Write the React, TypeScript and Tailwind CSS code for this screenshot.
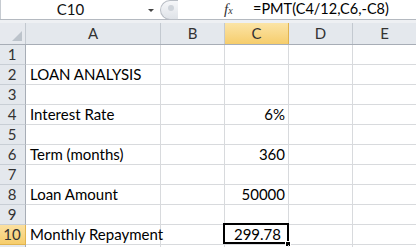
import React from "react";

const cols = ["A", "B", "C", "D", "E"];
const colWidths = ["w-[135px]", "w-[64px]", "w-[64px]", "w-[64px]", "w-[64px]"];

type Row = { n: number; a?: string; c?: string };

const rows: Row[] = [
  { n: 1 },
  { n: 2, a: "LOAN ANALYSIS" },
  { n: 3 },
  { n: 4, a: "Interest Rate", c: "6%" },
  { n: 5 },
  { n: 6, a: "Term (months)", c: "360" },
  { n: 7 },
  { n: 8, a: "Loan Amount", c: "50000" },
  { n: 9 },
  { n: 10, a: "Monthly Repayment", c: "299.78" },
  { n: 11 },
];

const cell = "h-[20px] shrink-0 border-r border-b border-[#d8dadd] leading-[19px]";

export default function App() {
  return (
    <div className="w-[416px] h-[247px] overflow-hidden bg-white font-['Lato',sans-serif] text-[15px] text-black">
      {/* formula bar */}
      <div className="flex h-[20px] border-b border-[#b4b9c0]">
        <div className="relative flex w-[160px] items-center justify-center border-l border-[#c6cbd1] bg-white">
          <span className="pr-[20px] leading-none text-[#111]">C10</span>
          <span className="absolute left-[147px] top-[9px] h-0 w-0 border-x-[3px] border-t-[3px] border-x-transparent border-t-[#444]" />
        </div>
        <div className="relative h-[20px] w-[18px] rounded-l-full border border-r-0 border-[#b9bec5] bg-gradient-to-b from-[#f6f7f9] to-[#dfe3e8]">
          <span className="absolute left-[7px] top-[4px] h-[6px] w-[6px] rounded-full bg-[#cfd4da]" />
        </div>
        <div className="flex flex-1 items-center">
          <span className="ml-[46px] w-[17px] font-['Liberation_Serif',serif] text-[15px] italic leading-none text-[#333]">
            f<span className="text-[10px]">x</span>
          </span>
          <span className="ml-[12px] text-[14.5px] leading-none">=PMT(C4/12,C6,-C8)</span>
        </div>
      </div>
      <div className="h-[3px] bg-[#eef0f3]" />

      {/* column headers */}
      <div className="flex h-[22px] border-b border-[#a7adb6] text-[#333]">
        <div className="relative w-[26px] shrink-0 border-r border-[#c3c9d0] bg-[#e6e9ee]">
          <span className="absolute left-[12px] top-[8px] h-0 w-0 border-b-[10px] border-l-[10px] border-b-[#bcc3cb] border-l-transparent" />
        </div>
        {cols.map((c, i) => (
          <div
            key={c}
            className={`${colWidths[i]} shrink-0 flex items-center justify-center border-r ${
              c === "C"
                ? "border-[#e0b34f] bg-gradient-to-b from-[#fbe4a6] to-[#f6cd6b]"
                : "border-[#c3c9d0] bg-[#e4e8ed]"
            }`}
          >
            {c}
          </div>
        ))}
      </div>

      {/* rows */}
      {rows.map((r) => (
        <div key={r.n} className="flex">
          <div
            className={`h-[20px] w-[26px] shrink-0 border-r border-b pr-[1px] text-center leading-[19px] text-[#333] ${
              r.n === 10
                ? "border-r-[#e0b34f] border-b-[#e0b34f] bg-gradient-to-b from-[#fbe0a0] to-[#f6cd6b]"
                : "border-r-[#a7adb6] border-b-[#c8ced5] bg-[#e4e8ed]"
            }`}
          >
            {r.n < 11 ? r.n : ""}
          </div>
          <div className={`${cell} w-[135px] whitespace-nowrap pl-[4px]`}>{r.a}</div>
          <div className={`${cell} w-[64px]`} />
          <div className={`${cell} relative w-[64px] pr-[3px] text-right`}>
            {r.n === 10 ? <span className="pr-[4px]">{r.c}</span> : r.c}
            {r.n === 10 && (
              <>
                <span className="absolute -left-[2px] -top-[2px] -right-[1px] bottom-0 border-2 border-black" />
                <span className="absolute -right-[3px] -bottom-[3px] h-[6px] w-[6px] border border-white bg-black" />
              </>
            )}
          </div>
          <div className={`${cell} w-[64px]`} />
          <div className={`${cell} w-[64px]`} />
        </div>
      ))}
    </div>
  );
}
